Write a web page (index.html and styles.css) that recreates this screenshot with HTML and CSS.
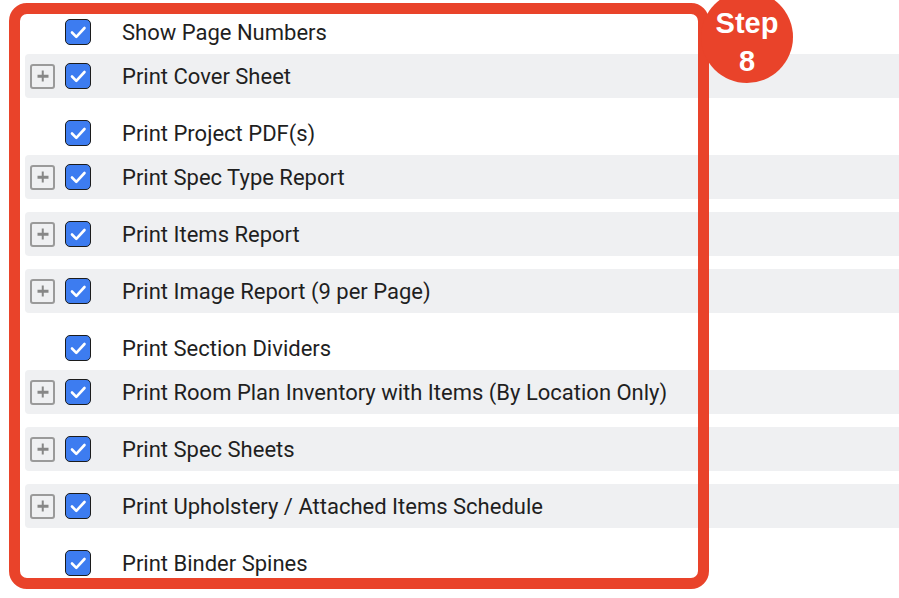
FILE: index.html
```html
<!DOCTYPE html>
<html lang="en">
<head>
    <meta charset="UTF-8">
    <meta name="viewport" content="width=device-width, initial-scale=1.0">
    <title>Print Options</title>
    <link rel="stylesheet" href="styles.css">
</head>
<body>
    <div class="page">
        <ul class="options">
            <li class="option">
                <span class="expander empty"></span>
                <span class="check"><svg viewBox="0 0 26 26"><polyline points="7,13.5 11.3,17.8 19.5,9"/></svg></span>
                <span class="label">Show Page Numbers</span>
            </li>
            <li class="option group">
                <span class="expander"></span>
                <span class="check"><svg viewBox="0 0 26 26"><polyline points="7,13.5 11.3,17.8 19.5,9"/></svg></span>
                <span class="label">Print Cover Sheet</span>
            </li>
            <li class="option">
                <span class="expander empty"></span>
                <span class="check"><svg viewBox="0 0 26 26"><polyline points="7,13.5 11.3,17.8 19.5,9"/></svg></span>
                <span class="label">Print Project PDF(s)</span>
            </li>
            <li class="option group">
                <span class="expander"></span>
                <span class="check"><svg viewBox="0 0 26 26"><polyline points="7,13.5 11.3,17.8 19.5,9"/></svg></span>
                <span class="label">Print Spec Type Report</span>
            </li>
            <li class="option group">
                <span class="expander"></span>
                <span class="check"><svg viewBox="0 0 26 26"><polyline points="7,13.5 11.3,17.8 19.5,9"/></svg></span>
                <span class="label">Print Items Report</span>
            </li>
            <li class="option group">
                <span class="expander"></span>
                <span class="check"><svg viewBox="0 0 26 26"><polyline points="7,13.5 11.3,17.8 19.5,9"/></svg></span>
                <span class="label">Print Image Report (9 per Page)</span>
            </li>
            <li class="option">
                <span class="expander empty"></span>
                <span class="check"><svg viewBox="0 0 26 26"><polyline points="7,13.5 11.3,17.8 19.5,9"/></svg></span>
                <span class="label">Print Section Dividers</span>
            </li>
            <li class="option group">
                <span class="expander"></span>
                <span class="check"><svg viewBox="0 0 26 26"><polyline points="7,13.5 11.3,17.8 19.5,9"/></svg></span>
                <span class="label">Print Room Plan Inventory with Items (By Location Only)</span>
            </li>
            <li class="option group">
                <span class="expander"></span>
                <span class="check"><svg viewBox="0 0 26 26"><polyline points="7,13.5 11.3,17.8 19.5,9"/></svg></span>
                <span class="label">Print Spec Sheets</span>
            </li>
            <li class="option group">
                <span class="expander"></span>
                <span class="check"><svg viewBox="0 0 26 26"><polyline points="7,13.5 11.3,17.8 19.5,9"/></svg></span>
                <span class="label">Print Upholstery / Attached Items Schedule</span>
            </li>
            <li class="option">
                <span class="expander empty"></span>
                <span class="check"><svg viewBox="0 0 26 26"><polyline points="7,13.5 11.3,17.8 19.5,9"/></svg></span>
                <span class="label">Print Binder Spines</span>
            </li>
        </ul>

        <!-- annotation overlay -->
        <div class="step-frame"></div>
        <div class="step-badge">Step<br>8</div>
    </div>
</body>
</html>
```

FILE: styles.css
```css
body {
    margin: 0;
    font-family: Roboto, 'Liberation Sans', sans-serif;
    background: white;
    color: #1f1f1f;
    overflow: hidden;
}

.page {
    position: relative;
    height: 598px;
}

.options {
    list-style: none;
    margin: 0;
    padding: 10px 0 0 25px;
}

.option {
    display: flex;
    align-items: center;
    height: 44px;
    padding-left: 5px;
}

.option.group {
    background: #eff0f2;
    border-radius: 4px 0 0 4px;
    margin-bottom: 13px;
}

.expander {
    position: relative;
    box-sizing: border-box;
    width: 25px;
    height: 25px;
    border: 2.5px solid #9a9a9a;
    border-radius: 3px;
    margin-right: 10px;
}

.expander::before,
.expander::after {
    content: "";
    position: absolute;
    background: #878787;
    left: 50%;
    top: 50%;
    transform: translate(-50%, -50%);
}

.expander::before {
    width: 11px;
    height: 2.5px;
}

.expander::after {
    width: 2.5px;
    height: 11px;
}

.expander.empty {
    border-color: transparent;
}

.expander.empty::before,
.expander.empty::after {
    display: none;
}

.check {
    box-sizing: border-box;
    width: 26px;
    height: 26px;
    background: #3d7cf0;
    border: 1.5px solid #1c1c1c;
    border-radius: 5px;
    display: flex;
}

.check svg {
    margin: -1.5px;
    width: 26px;
    height: 26px;
}

.check polyline {
    fill: none;
    stroke: white;
    stroke-width: 2.6;
    stroke-linecap: round;
    stroke-linejoin: round;
}

.label {
    margin-left: 31px;
    font-size: 22px;
}

.step-frame {
    position: absolute;
    left: 9px;
    top: 3px;
    width: 700px;
    height: 586px;
    box-sizing: border-box;
    border: 11px solid #e9432a;
    border-radius: 18px;
}

.step-badge {
    position: absolute;
    left: 701px;
    top: -9px;
    width: 92px;
    height: 92px;
    border-radius: 50%;
    background: #e9432a;
    color: white;
    font-family: 'Liberation Sans', Arial, sans-serif;
    font-weight: 700;
    font-size: 29px;
    line-height: 38px;
    text-align: center;
    padding-top: 13px;
    box-sizing: border-box;
}
```
